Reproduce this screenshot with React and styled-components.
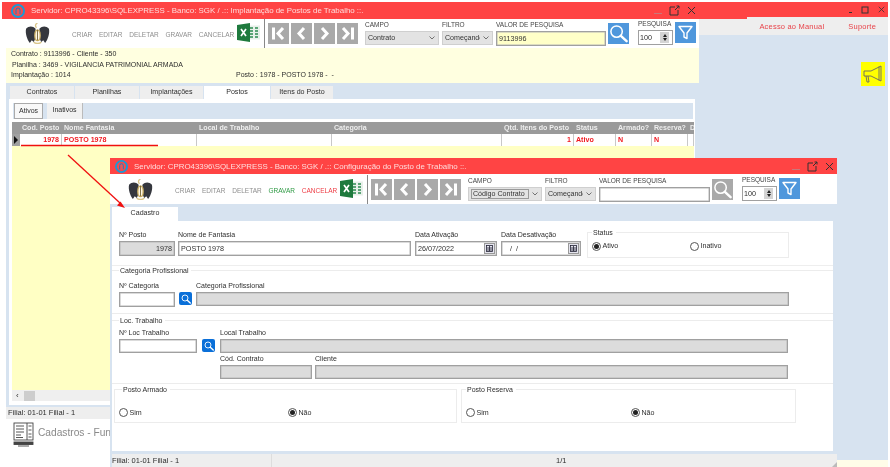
import styled, { createGlobalStyle } from "styled-components";

const GlobalStyle = createGlobalStyle`
    html, body {
        margin: 0;
        padding: 0;
        background: #fff;
    }
    * {
        box-sizing: border-box;
    }
`;

const Desktop = styled.div`
    position: relative;
    width: 890px;
    height: 467px;
    overflow: hidden;
    background: #fff;
    font-family: "Liberation Sans", Arial, sans-serif;
    font-size: 7.2px;
    color: #2e2e2e;
    filter: blur(0.25px);
`;

const Shell = styled.div`
    width: 888px;
    height: 467px;
    padding-top: 2px;
    display: flex;
    flex-direction: column;
`;

const AppBar = styled.div`
    height: 15px;
    margin-left: 2px;
    background: #ff4444;
    display: flex;
    justify-content: flex-end;
    align-items: center;
    gap: 9px;
    padding-right: 3px;
`;

const MenuStrip = styled.div`
    height: 18px;
    margin-left: 6px;
    background: #eeeeee;
    display: flex;
    justify-content: flex-end;
    align-items: center;
    padding-right: 12px;
    gap: 24px;
`;

const MenuLink = styled.span`
    color: #e8434a;
    font-size: 7.5px;
    letter-spacing: 0.2px;
`;

const Workspace = styled.div`
    flex: 1;
    margin-left: 6px;
    background: #d7e3f0;
    display: flex;
    justify-content: flex-end;
    align-items: flex-start;
    padding: 27px 3px 0 0;
`;

const Bottom = styled.div`
    height: 7px;
    margin-left: 6px;
    background: #fffde8;
`;

const Notice = styled.div`
    width: 24px;
    height: 24px;
    background: #ffff00;
    display: grid;
    place-items: center;
`;

const Window = styled.section`
    position: absolute;
    left: ${(p) => p.$left}px;
    top: ${(p) => p.$top}px;
    width: ${(p) => p.$width}px;
    height: ${(p) => p.$height}px;
    display: flex;
    flex-direction: column;
`;

const TitleBar = styled.header`
    height: ${(p) => p.$height}px;
    background: #ff4444;
    display: flex;
    align-items: center;
    padding-left: ${(p) => p.$pad}px;
    padding-right: ${(p) => p.$right}px;
    gap: 6px;
    color: #ffdcdc;
    flex: none;
`;

const TitleText = styled.span`
    flex: 1;
    font-size: 7.9px;
    white-space: nowrap;
`;

const WinButtons = styled.div`
    display: flex;
    align-items: center;
    gap: 7px;
`;

const WindowBody = styled.div`
    margin-left: 4px;
    width: 693px;
    flex: 1;
    display: flex;
    flex-direction: column;
`;

const Toolbar = styled.div`
    height: ${(p) => p.$height}px;
    background: #fff;
    display: flex;
    align-items: flex-start;
    flex: none;
    padding-left: ${(p) => p.$pad}px;
    padding-top: ${(p) => p.$top || 0}px;
`;

const LogoSlot = styled.div`
    width: 47px;
    height: 100%;
    padding-top: 4px;
`;

const Actions = styled.div`
    width: 165px;
    height: 100%;
    display: flex;
    align-items: center;
    gap: 6.8px;
    padding-top: 1px;
`;

const Action = styled.span`
    font-size: 6.5px;
    color: ${(p) => p.$color || "#8e8e8e"};
`;

const ExcelSlot = styled.div`
    width: 27px;
    padding-top: 4px;
`;

const Separator = styled.div`
    width: 1px;
    height: 100%;
    background: #888;
    margin-right: 3px;
`;

const NavGroup = styled.div`
    display: flex;
    gap: 2px;
    padding-top: 4px;
    margin-right: 7px;
`;

const NavButton = styled.div`
    width: 21px;
    height: 21px;
    background: #a9a9a9;
    display: grid;
    place-items: center;
`;

const Control = styled.div`
    width: ${(p) => p.$w}px;
    margin-right: ${(p) => p.$mr || 3}px;
    padding-top: ${(p) => p.$top}px;
`;

const SmallLabel = styled.div`
    font-size: 6.5px;
    height: 8px;
    line-height: 8px;
    margin-bottom: 2px;
    color: #444;
    white-space: nowrap;
`;

const SelectBox = styled.div`
    height: 14px;
    background: #e3e3e3;
    border: 1px solid #cfcfcf;
    display: flex;
    align-items: center;
    justify-content: space-between;
    padding: 0 3px 0 2px;
    font-size: 7.1px;
    color: #333;
    white-space: nowrap;
    overflow: hidden;
`;

const SelectText = styled.span`
    flex: 1;
    overflow: hidden;
    margin-right: 3px;
    ${(p) => p.$focus && "border: 1px solid #9a9a9a; padding: 0 1px;"}
`;

const SearchInput = styled.input`
    display: block;
    width: 100%;
    height: ${(p) => p.$h || 15}px;
    padding: 0 2px;
    border: 1px solid #a0a0a0;
    box-shadow: inset 0 0 0 0.5px #b8b8b8;
    outline: none;
    border-radius: 0;
    background: ${(p) => p.$bg || "#fff"};
    text-align: ${(p) => p.$align || "left"};
    font-family: inherit;
    font-size: 7.2px;
    color: #333;
`;

const SquareButton = styled.div`
    width: 21px;
    height: 21px;
    background: ${(p) => p.$bg};
    display: grid;
    place-items: center;
    margin-top: ${(p) => p.$top}px;
    margin-right: ${(p) => p.$mr || 0}px;
`;

const Spinner = styled.div`
    width: 35px;
    height: 15px;
    background: #fff;
    border: 1px solid #a0a0a0;
    display: flex;
    align-items: center;
    justify-content: space-between;
    padding: 0 3px 0 1px;
    font-size: 7.2px;
`;

const SpinArrows = styled.div`
    width: 9px;
    height: 11px;
    background: #d4d4d4;
    display: flex;
    flex-direction: column;
    align-items: center;
    justify-content: center;
    gap: 1.5px;
`;

const Tri = styled.i`
    width: 0;
    height: 0;
    border-left: 2.5px solid transparent;
    border-right: 2.5px solid transparent;
    ${(p) => (p.$up ? "border-bottom: 3px solid #222;" : "border-top: 3px solid #222;")}
`;

const InfoBlock = styled.div`
    height: 35px;
    background: #ffffe0;
    padding: 1px 5px;
    flex: none;
`;

const InfoLine = styled.div`
    height: 10.6px;
    line-height: 10.6px;
    font-size: 7px;
    display: flex;
    white-space: pre;
    padding-left: ${(p) => p.$pad || 0}px;
`;

const InfoCol = styled.span`
    width: 225px;
`;

const BlueArea = styled.div`
    height: 324px;
    background: #d7e3f0;
    padding-top: 3px;
    flex: none;
    display: flex;
    flex-direction: column;
`;

const TabRow = styled.div`
    display: flex;
    height: 13px;
    padding-left: 4px;
    gap: 1px;
    flex: none;
`;

const Tab = styled.div`
    width: ${(p) => p.$w}px;
    background: ${(p) => (p.$on ? "#fff" : "#eeeeee")};
    text-align: center;
    line-height: 13px;
    font-size: 7.1px;
`;

const TabPanel = styled.div`
    height: 306px;
    margin: 0 4px 0 3px;
    background: #fff;
    padding: 4px 2px 4px 3px;
    display: flex;
    flex-direction: column;
    flex: none;
`;

const SubBar = styled.div`
    height: 16px;
    margin-left: 1px;
    background: #d7e3f0;
    display: flex;
    padding-left: 1px;
    gap: 4px;
    flex: none;
`;

const SubTab = styled.div`
    width: ${(p) => p.$w}px;
    background: #f1f1f1;
    text-align: center;
    line-height: 14px;
    font-size: 7px;
    border-right: 1px solid #bbb;
    ${(p) => p.$on && "border: 1px solid #aaa; background: #f8f8f8; line-height: 13px;"}
`;

const columns = "8px 42px 135px 135px 170px 72px 42px 36px 36px 6px";

const DataGrid = styled.div`
    margin-top: 3px;
    flex: 1;
    display: flex;
    flex-direction: column;
    width: 682px;
    min-height: 0;
`;

const GridHead = styled.div`
    display: grid;
    grid-template-columns: ${columns};
    height: 12px;
    background: #9a9a9a;
    flex: none;
`;

const HeadCell = styled.div`
    color: #eeeeee;
    font-weight: bold;
    font-size: 7.1px;
    line-height: 12px;
    padding-left: 2px;
    white-space: nowrap;
    overflow: hidden;
`;

const GridRow = styled.div`
    display: grid;
    grid-template-columns: ${columns};
    height: 12px;
    flex: none;
`;

const RowCell = styled.div`
    background: #fff;
    border-right: 1px solid #c8c8c8;
    color: #f01820;
    font-weight: bold;
    font-size: 7.1px;
    line-height: 12px;
    padding: 0 2px;
    text-align: ${(p) => p.$align || "left"};
    white-space: nowrap;
`;

const Marker = styled.div`
    background: #a0a0a0;
    display: flex;
    align-items: center;
    padding-left: 2px;
`;

const MarkerTri = styled.i`
    width: 0;
    height: 0;
    border-top: 4px solid transparent;
    border-bottom: 4px solid transparent;
    border-left: 4px solid #111;
`;

const YellowFill = styled.div`
    flex: 1;
    background: #ffffc4;
`;

const ScrollBar = styled.div`
    height: 11px;
    background: #efefef;
    display: flex;
    align-items: center;
    gap: 5px;
    padding-left: 4px;
    flex: none;
    font-size: 8px;
`;

const Thumb = styled.div`
    width: 11px;
    height: 10px;
    background: #cdcdcd;
`;

const FilialBar = styled.div`
    height: 12px;
    line-height: 12px;
    background: #eeeeee;
    padding-left: 2px;
    font-size: 7.5px;
    flex: none;
`;

const Dock = styled.div`
    background: #fff;
    flex: 1;
    display: flex;
    align-items: flex-start;
    gap: 4px;
    padding: 3px 0 0 7px;
    color: #8a8a8a;
    font-size: 10.2px;
`;

const DockLabel = styled.span`
    line-height: 21px;
    white-space: nowrap;
`;

const FrontBody = styled.div`
    flex: 1;
    background: #d7e3f0;
    display: flex;
    flex-direction: column;
    padding: 3px 4px 0 2px;
`;

const FrontTab = styled.div`
    width: 66px;
    height: 14px;
    background: #fff;
    text-align: center;
    line-height: 13px;
    font-size: 7.1px;
    flex: none;
`;

const FormPanel = styled.div`
    height: 230px;
    background: #fff;
    flex: none;
`;

const TopSection = styled.div`
    height: 45px;
    display: flex;
    align-items: flex-start;
    padding: 8px 0 0 7px;
    border-bottom: 1px solid #eee;
`;

const Field = styled.div`
    width: ${(p) => p.$w}px;
    margin-right: ${(p) => p.$mr || 0}px;
    flex: none;
`;

const FieldLabel = styled.div`
    height: 12px;
    line-height: 11px;
    font-size: 7px;
    white-space: nowrap;
`;

const DateWrap = styled.div`
    position: relative;
`;

const DateIcon = styled.div`
    position: absolute;
    right: 2px;
    top: 2px;
    width: 11px;
    height: 11px;
    background: #e4e4ee;
    border: 1px solid #999;
    display: grid;
    place-items: center;
`;

const Group = styled.fieldset`
    margin: ${(p) => p.$margin || "0"};
    padding: 0;
    width: ${(p) => (p.$w ? p.$w + "px" : "auto")};
    height: ${(p) => p.$h}px;
    border: ${(p) => (p.$line ? "0" : "1px solid #ececec")};
    border-top: 1.5px solid #ececec;
    ${(p) => p.$line && "border-bottom: 1.5px solid #ececec;"}
    min-width: 0;
    flex: none;
`;

const Legend = styled.legend`
    margin-left: ${(p) => p.$ml || 4}px;
    padding: 0 3px 0 1px;
    font-size: 7px;
    line-height: 9px;
`;

const RadioRow = styled.div`
    display: flex;
    padding-left: ${(p) => p.$pad}px;
    padding-top: ${(p) => p.$top}px;
`;

const RadioItem = styled.div`
    width: ${(p) => p.$w}px;
    display: flex;
    align-items: center;
    gap: 1.5px;
    font-size: 7.1px;
    flex: none;
`;

const RadioDot = styled.span`
    width: 9px;
    height: 9px;
    border-radius: 50%;
    border: 1px solid #555;
    background: #fff;
    display: grid;
    place-items: center;
    &::after {
        content: "";
        width: 5px;
        height: 5px;
        border-radius: 50%;
        background: ${(p) => (p.$on ? "#222" : "transparent")};
    }
`;

const FieldRow = styled.div`
    display: flex;
    align-items: flex-start;
    padding-left: ${(p) => p.$pad || 7}px;
    margin-top: ${(p) => p.$top || 0}px;
`;

const LookupButton = styled.div`
    width: 13px;
    height: 13px;
    margin: 12px ${(p) => p.$mr}px 0 ${(p) => p.$ml}px;
    background: #0a6fd8;
    border-radius: 2px;
    display: grid;
    place-items: center;
    flex: none;
`;

const ArmedRow = styled.div`
    display: flex;
    padding: 1px 0 0 2px;
    gap: 4px;
`;

const StatusBar = styled.footer`
    height: 13px;
    margin: 3px -4px 0 0;
    background: #eeeeee;
    display: flex;
    font-size: 7.5px;
    line-height: 13px;
    flex: none;
    position: relative;
`;

const StatusCell = styled.div`
    width: ${(p) => p.$w}px;
    padding-left: ${(p) => p.$pad || 0}px;
    border-right: ${(p) => (p.$line ? "1px solid #ddd" : "0")};
    flex: none;
`;

const Grip = styled.i`
    position: absolute;
    right: 0;
    bottom: 0;
    width: 0;
    height: 0;
    border-left: 5px solid transparent;
    border-bottom: 5px solid #bbb;
`;

const Annotations = styled.svg`
    position: absolute;
    left: 0;
    top: 0;
    pointer-events: none;
`;

const AppGlyph = ({ size = 14 }) => (
    <svg width={size} height={size} viewBox="0 0 14 14">
        <circle cx="7" cy="7" r="6" fill="none" stroke="#1a9ad6" strokeWidth="2" />
        <circle cx="7" cy="7" r="3.8" fill="#e8555a" />
        <path d="M5 10V6a2 2 0 0 1 4 0v4" fill="none" stroke="#1a7fc0" strokeWidth="1" />
    </svg>
);

const Logo = () => (
    <svg width="25" height="21" viewBox="0 0 26 22">
        <path d="M11 6C8 3 4 3 1 6c-1 5 1 11 4 15l2-3 2 2c1-2 2-4 2-7z" fill="#35373e" />
        <path d="M15 6c3-3 7-3 10 0 1 5-1 11-4 15l-2-3-2 2c-1-2-2-4-2-7z" fill="#35373e" />
        <path d="M13 0c-2 1-3 3-1 5" fill="none" stroke="#d9c58a" strokeWidth="1.4" />
        <ellipse cx="13" cy="13" rx="2.800" ry="5.500" fill="#fff8e6" stroke="#c9ad62" strokeWidth="1.4" />
        <path d="M13 7v11" stroke="#6b5a2c" strokeWidth="0.9" />
        <path d="M9 20c2 2 6 2 8 0" fill="none" stroke="#d9c58a" strokeWidth="1.4" />
    </svg>
);

const Excel = () => (
    <svg width="23" height="19" viewBox="0 0 23 19">
        <rect x="10" y="2.5" width="13" height="14" fill="#e8f0ea" />
        <path d="M13 5h3M18 5h3M13 8h3M18 8h3M13 11h3M18 11h3M13 14h3M18 14h3" stroke="#2b8a50" strokeWidth="1.4" />
        <path d="M0 2l13-2v19L0 17z" fill="#1f7a3e" />
        <path d="M4 6l5 7M9 6l-5 7" stroke="#fff" strokeWidth="1.7" />
    </svg>
);

const NavIcon = ({ d, bar }) => (
    <svg width="15" height="15" viewBox="0 0 15 15">
        {bar === "left" && <rect x="1" y="1.5" width="3" height="12" fill="#fff" />}
        {bar === "right" && <rect x="11" y="1.5" width="3" height="12" fill="#fff" />}
        <path d={d} fill="none" stroke="#fff" strokeWidth="3" />
    </svg>
);

const Magnifier = ({ size = 19, color = "#fff", stroke = 1.6 }) => (
    <svg width={size} height={size} viewBox="0 0 20 20">
        <circle cx="8" cy="8" r="6" fill="none" stroke={color} strokeWidth={stroke} />
        <path d="M12.5 12.5L18.5 18" stroke={color} strokeWidth={stroke + 1} strokeLinecap="round" />
    </svg>
);

const FunnelIcon = () => (
    <svg width="15" height="15" viewBox="0 0 15 15">
        <path d="M1 1.5h13L9 8v5.5l-3-1.5V8z" fill="none" stroke="#fff" strokeWidth="1.4" strokeLinejoin="round" />
    </svg>
);

const Megaphone = () => (
    <svg width="20" height="20" viewBox="0 0 20 20" fill="none" stroke="#666" strokeWidth="0.9">
        <path d="M1 7h7l10-5v15L8 12H1z" />
        <path d="M16 2.500v14" />
        <path d="M3 12l1 6h2l-1-6" />
    </svg>
);

const RestoreIcon = ({ color = "#333" }) => (
    <svg width="11" height="11" viewBox="0 0 11 11" fill="none" stroke={color} strokeWidth="1">
        <path d="M6 2H1v8h8V5" />
        <path d="M6 5l4-4M7.500 1H10v2.500" />
    </svg>
);

const CloseIcon = ({ size = 9, color = "#333" }) => (
    <svg width={size} height={size} viewBox="0 0 9 9" stroke={color} strokeWidth="1">
        <path d="M1 1l7 7M8 1L1 8" />
    </svg>
);

const MinIcon = ({ w = 8, color = "#c9787a" }) => (
    <svg width={w} height="9" viewBox={`0 0 ${w} 9`}>
        <rect x="0" y="7" width={w} height="1" fill={color} />
    </svg>
);

const Chevron = () => (
    <svg width="6" height="4" viewBox="0 0 6 4" fill="none" stroke="#555" strokeWidth="0.8">
        <path d="M0.500 0.500L3 3l2.500-2.500" />
    </svg>
);

const CalendarGlyph = () => (
    <svg width="7" height="7" viewBox="0 0 7 7" fill="none" stroke="#223" strokeWidth="0.8">
        <rect x="0.500" y="0.500" width="6" height="6" />
        <path d="M1 3h5M1 5h5M3.500 1v5" />
    </svg>
);

const CadastroIcon = () => (
    <svg width="21" height="25" viewBox="0 0 21 25" fill="none" stroke="#444" strokeWidth="0.9">
        <rect x="1" y="1" width="19" height="17" />
        <path d="M3 4h8M3 7h8M3 10h8M3 13h5M3 15.500h7M14 1v17M15.500 4h3M15.500 8h3M15.500 12h3M15.500 15h3" />
        <rect x="1" y="20" width="19" height="2.500" fill="#444" />
        <path d="M5 24h11" />
    </svg>
);

const Radio = ({ on, label, w }) => (
    <RadioItem $w={w}>
        <RadioDot $on={on} />
        {label}
    </RadioItem>
);

const SearchTools = ({ campo, focus, valor, valueBg, searchBg, valorW }) => (
    <>
        <NavGroup>
            <NavButton><NavIcon bar="left" d="M12 2L7 7.500l5 5.500" /></NavButton>
            <NavButton><NavIcon d="M10 2L5 7.500l5 5.500" /></NavButton>
            <NavButton><NavIcon d="M5 2l5 5.500L5 13" /></NavButton>
            <NavButton><NavIcon bar="right" d="M3 2l5 5.500L3 13" /></NavButton>
        </NavGroup>
        <Control $w={74} $top={2}>
            <SmallLabel>CAMPO</SmallLabel>
            <SelectBox>
                <SelectText $focus={focus}>{campo}</SelectText>
                <Chevron />
            </SelectBox>
        </Control>
        <Control $w={51} $top={2}>
            <SmallLabel>FILTRO</SmallLabel>
            <SelectBox>
                <SelectText>Começando</SelectText>
                <Chevron />
            </SelectBox>
        </Control>
        <Control $w={valorW} $mr={2} $top={2}>
            <SmallLabel>VALOR DE PESQUISA</SmallLabel>
            <SearchInput readOnly value={valor} $bg={valueBg} />
        </Control>
        <SquareButton $bg={searchBg} $top={4} $mr={9}>
            <Magnifier />
        </SquareButton>
        <Control $w={35} $mr={2} $top={1}>
            <SmallLabel>PESQUISA</SmallLabel>
            <Spinner>
                100
                <SpinArrows><Tri $up /><Tri /></SpinArrows>
            </Spinner>
        </Control>
        <SquareButton $bg="#4f97dc" $top={3}>
            <FunnelIcon />
        </SquareButton>
    </>
);

function App() {
    return (
        <Desktop>
            <GlobalStyle />
            <Shell>
                <AppBar>
                    <MinIcon w={3} color="#333" />
                    <svg width="8" height="8" viewBox="0 0 8 8" fill="none" stroke="#333" strokeWidth="1"><rect x="1" y="1" width="6" height="6" /></svg>
                    <CloseIcon size={7} />
                </AppBar>
                <MenuStrip>
                    <MenuLink>Acesso ao Manual</MenuLink>
                    <MenuLink>Suporte</MenuLink>
                </MenuStrip>
                <Workspace>
                    <Notice><Megaphone /></Notice>
                </Workspace>
                <Bottom />
            </Shell>

            <Window $left={2} $top={2} $width={745} $height={465}>
                <TitleBar $height={17} $pad={9} $right={51}>
                    <AppGlyph />
                    <TitleText>Servidor: CPRO43396\SQLEXPRESS - Banco: SGK / .:: Implantação de Postos de Trabalho ::.</TitleText>
                    <WinButtons>
                        <MinIcon />
                        <RestoreIcon />
                        <CloseIcon />
                    </WinButtons>
                </TitleBar>
                <WindowBody>
                    <Toolbar $height={29} $pad={19}>
                        <LogoSlot><Logo /></LogoSlot>
                        <Actions>
                            <Action>CRIAR</Action>
                            <Action>EDITAR</Action>
                            <Action>DELETAR</Action>
                            <Action>GRAVAR</Action>
                            <Action>CANCELAR</Action>
                        </Actions>
                        <ExcelSlot><Excel /></ExcelSlot>
                        <Separator />
                        <SearchTools campo="Contrato" valor="9113996" valueBg="#ffffc8" searchBg="#4f97dc" valorW={110} />
                    </Toolbar>
                    <InfoBlock>
                        <InfoLine>Contrato : 9113996 - Cliente - 350</InfoLine>
                        <InfoLine $pad={1}>Planilha : 3469 - VIGILANCIA PATRIMONIAL ARMADA</InfoLine>
                        <InfoLine><InfoCol>Implantação : 1014</InfoCol>Posto : 1978 - POSTO 1978 -  -</InfoLine>
                    </InfoBlock>
                    <BlueArea>
                        <TabRow>
                            <Tab $w={64}>Contratos</Tab>
                            <Tab $w={64}>Planilhas</Tab>
                            <Tab $w={63}>Implantações</Tab>
                            <Tab $w={66} $on>Postos</Tab>
                            <Tab $w={62}>Itens do Posto</Tab>
                        </TabRow>
                        <TabPanel>
                            <SubBar>
                                <SubTab $w={29} $on>Ativos</SubTab>
                                <SubTab $w={36}>Inativos</SubTab>
                            </SubBar>
                            <DataGrid>
                                <GridHead>
                                    <div />
                                    <HeadCell>Cod. Posto</HeadCell>
                                    <HeadCell>Nome Fantasia</HeadCell>
                                    <HeadCell>Local de Trabalho</HeadCell>
                                    <HeadCell>Categoria</HeadCell>
                                    <HeadCell>Qtd. Itens do Posto</HeadCell>
                                    <HeadCell>Status</HeadCell>
                                    <HeadCell>Armado?</HeadCell>
                                    <HeadCell>Reserva?</HeadCell>
                                    <HeadCell>D</HeadCell>
                                </GridHead>
                                <GridRow>
                                    <Marker><MarkerTri /></Marker>
                                    <RowCell $align="right">1978</RowCell>
                                    <RowCell>POSTO 1978</RowCell>
                                    <RowCell />
                                    <RowCell />
                                    <RowCell $align="right">1</RowCell>
                                    <RowCell>Ativo</RowCell>
                                    <RowCell>N</RowCell>
                                    <RowCell>N</RowCell>
                                    <RowCell />
                                </GridRow>
                                <YellowFill />
                                <ScrollBar>
                                    ‹
                                    <Thumb />
                                </ScrollBar>
                            </DataGrid>
                        </TabPanel>
                    </BlueArea>
                    <FilialBar>Filial: 01-01 Filial - 1</FilialBar>
                    <Dock>
                        <CadastroIcon />
                        <DockLabel>Cadastros - Funcionários</DockLabel>
                    </Dock>
                </WindowBody>
            </Window>

            <Window $left={110} $top={158} $width={727} $height={309}>
                <TitleBar $height={16} $pad={5} $right={3}>
                    <AppGlyph size={13} />
                    <TitleText>Servidor: CPRO43396\SQLEXPRESS - Banco: SGK / .:: Configuração do Posto de Trabalho ::.</TitleText>
                    <WinButtons>
                        <MinIcon />
                        <RestoreIcon />
                        <CloseIcon />
                    </WinButtons>
                </TitleBar>
                <Toolbar $height={30} $pad={18} $top={1}>
                    <LogoSlot><Logo /></LogoSlot>
                    <Actions>
                        <Action>CRIAR</Action>
                        <Action>EDITAR</Action>
                        <Action>DELETAR</Action>
                        <Action $color="#2f9a45">GRAVAR</Action>
                        <Action $color="#ee3c44">CANCELAR</Action>
                    </Actions>
                    <ExcelSlot><Excel /></ExcelSlot>
                    <Separator />
                    <SearchTools campo="Código Contrato" focus valor="" searchBg="#a9a9a9" valorW={111} />
                </Toolbar>
                <FrontBody>
                    <FrontTab>Cadastro</FrontTab>
                    <FormPanel>
                        <TopSection>
                            <Field $w={56} $mr={3}>
                                <FieldLabel>Nº Posto</FieldLabel>
                                <SearchInput readOnly value="1978" $bg="#dcdcdc" $align="right" />
                            </Field>
                            <Field $w={233} $mr={4}>
                                <FieldLabel>Nome de Fantasia</FieldLabel>
                                <SearchInput readOnly value="POSTO 1978" />
                            </Field>
                            <Field $w={82} $mr={4}>
                                <FieldLabel>Data Ativação</FieldLabel>
                                <DateWrap>
                                    <SearchInput readOnly value="26/07/2022" />
                                    <DateIcon><CalendarGlyph /></DateIcon>
                                </DateWrap>
                            </Field>
                            <Field $w={80} $mr={6}>
                                <FieldLabel>Data Desativação</FieldLabel>
                                <DateWrap>
                                    <SearchInput readOnly value="  /  /" style={{ whiteSpace: "pre", paddingLeft: 4 }} />
                                    <DateIcon><CalendarGlyph /></DateIcon>
                                </DateWrap>
                            </Field>
                            <Group $w={202} $h={30} $margin="-1.5px 0 0 0">
                                <Legend>Status</Legend>
                                <RadioRow $pad={4} $top={5}>
                                    <Radio on label="Ativo" w={98} />
                                    <Radio label="Inativo" w={60} />
                                </RadioRow>
                            </Group>
                        </TopSection>
                        <Group $line $h={48}>
                            <Legend $ml={7}>Categoria Profissional</Legend>
                            <FieldRow $top={5}>
                                <Field $w={56}>
                                    <FieldLabel>Nº Categoria</FieldLabel>
                                    <SearchInput readOnly value="" />
                                </Field>
                                <LookupButton $ml={4} $mr={4}><Magnifier size={10} stroke={1.8} /></LookupButton>
                                <Field $w={593}>
                                    <FieldLabel>Categoria Profissional</FieldLabel>
                                    <SearchInput readOnly value="" $bg="#dcdcdc" $h={14} />
                                </Field>
                            </FieldRow>
                        </Group>
                        <Group $line $h={68} $margin="2px 0 0 0">
                            <Legend $ml={7}>Loc. Trabalho</Legend>
                            <FieldRow $top={2}>
                                <Field $w={78}>
                                    <FieldLabel>Nº Loc Trabalho</FieldLabel>
                                    <SearchInput readOnly value="" $h={14} />
                                </Field>
                                <LookupButton $ml={5} $mr={5}><Magnifier size={10} stroke={1.8} /></LookupButton>
                                <Field $w={568}>
                                    <FieldLabel>Local Trabalho</FieldLabel>
                                    <SearchInput readOnly value="" $bg="#dcdcdc" $h={14} />
                                </Field>
                            </FieldRow>
                            <FieldRow $pad={108}>
                                <Field $w={92} $mr={3}>
                                    <FieldLabel>Cód. Contrato</FieldLabel>
                                    <SearchInput readOnly value="" $bg="#dcdcdc" $h={14} />
                                </Field>
                                <Field $w={473}>
                                    <FieldLabel>Cliente</FieldLabel>
                                    <SearchInput readOnly value="" $bg="#dcdcdc" $h={14} />
                                </Field>
                            </FieldRow>
                        </Group>
                        <ArmedRow>
                            <Group $w={343} $h={38}>
                                <Legend $ml={7}>Posto Armado</Legend>
                                <RadioRow $pad={4} $top={14}>
                                    <Radio label="Sim" w={169} />
                                    <Radio on label="Não" w={60} />
                                </RadioRow>
                            </Group>
                            <Group $w={335} $h={38}>
                                <Legend $ml={4}>Posto Reserva</Legend>
                                <RadioRow $pad={4} $top={14}>
                                    <Radio label="Sim" w={165} />
                                    <Radio on label="Não" w={60} />
                                </RadioRow>
                            </Group>
                        </ArmedRow>
                    </FormPanel>
                    <StatusBar>
                        <StatusCell $w={160} $line>Filial: 01-01 Filial - 1</StatusCell>
                        <StatusCell $w={280} $pad={2}>&nbsp;</StatusCell>
                        <StatusCell $w={60} $pad={4}>1/1</StatusCell>
                        <Grip />
                    </StatusBar>
                </FrontBody>
            </Window>

            <Annotations width="890" height="467" viewBox="0 0 890 467">
                <path d="M21 145.500H158" stroke="#f01010" strokeWidth="1.4" />
                <path d="M68 155L120 203" stroke="#f01010" strokeWidth="1.3" />
                <path d="M125 208l-8-2.500 3.500-4z" fill="#f01010" />
            </Annotations>
        </Desktop>
    );
}

export default App;
